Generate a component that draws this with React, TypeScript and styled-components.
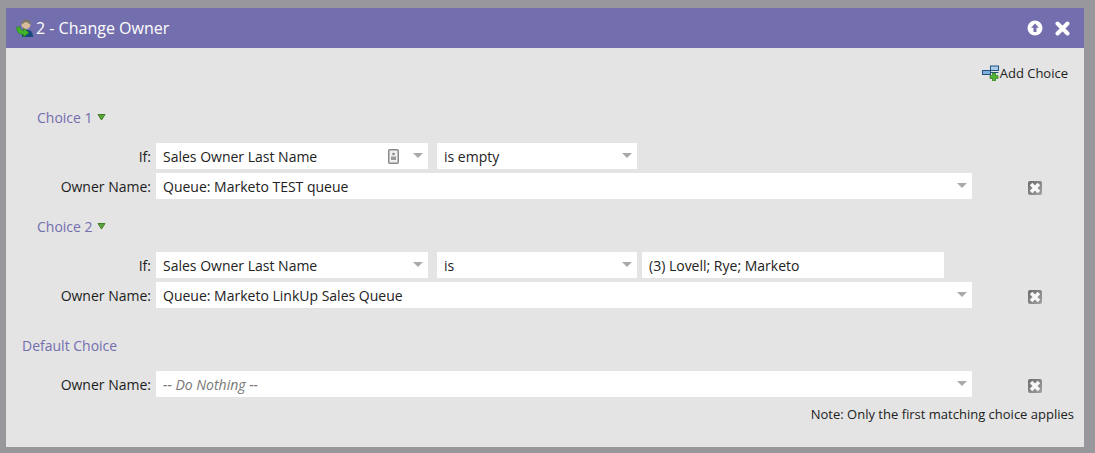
import React from "react"
import styled, {createGlobalStyle} from "styled-components"

const GlobalStyle = createGlobalStyle`
  html, body {
    margin: 0;
    padding: 0;
    background: #98979b;
  }
  body {
    font-family: "Open Sans", "Liberation Sans", sans-serif;
  }
`;

const Page = styled.div`
  width: 1095px;
  height: 453px;
  padding: 8px 11px 6px 6px;
  box-sizing: border-box;
  overflow: hidden;
`;

const Dialog = styled.div`
  height: 100%;
  display: flex;
  flex-direction: column;
  background: #e4e4e4;
`;

const Header = styled.div`
  height: 40px;
  flex: none;
  display: flex;
  align-items: center;
  padding: 0 14px 0 10px;
  background: #736eae;
  color: #fff;
`;

const Title = styled.div`
  flex: 1;
  margin-left: 3px;
  font-size: 16px;
  line-height: 40px;
`;

const HeaderTools = styled.div`
  display: flex;
  align-items: center;
  gap: 12px;
`;

const Body = styled.div`
  flex: 1;
  display: flex;
  flex-direction: column;
`;

const AddRow = styled.div`
  height: 26px;
  margin-top: 12px;
  padding-right: 16px;
  display: flex;
  align-items: center;
  justify-content: flex-end;
  gap: 1px;
  font-size: 13px;
  color: #222;
`;

const Heading = styled.div<{$left: number; $top: number; $bottom: number}>`
  height: 20px;
  display: flex;
  align-items: center;
  gap: 4px;
  margin: ${p => p.$top}px 0 ${p => p.$bottom}px ${p => p.$left}px;
  font-size: 14px;
  color: #736eae;
`;

const Row = styled.div<{$gap?: number}>`
  height: 26px;
  display: flex;
  align-items: center;
  margin-bottom: ${p => p.$gap ?? 0}px;
`;

const Label = styled.div`
  width: 145px;
  margin-right: 5px;
  text-align: right;
  font-size: 14px;
  color: #1c1c1c;
`;

const Field = styled.div<{$width: number; $after?: number; $muted?: boolean}>`
  width: ${p => p.$width}px;
  height: 26px;
  flex: none;
  box-sizing: border-box;
  margin-right: ${p => p.$after ?? 0}px;
  padding: 0 5px 0 7px;
  display: flex;
  align-items: center;
  gap: 14px;
  background: #fff;
  font-size: 14px;
  color: ${p => p.$muted ? "#777" : "#222"};
  font-style: ${p => p.$muted ? "italic" : "normal"};
`;

const FieldText = styled.span`
  flex: 1;
  padding-top: 1px;
  white-space: nowrap;
`;

const Caret = styled.span`
  width: 0;
  height: 0;
  flex: none;
  margin-top: -1px;
  border-left: 5px solid transparent;
  border-right: 5px solid transparent;
  border-top: 5px solid #a9a9a9;
`;

const DeleteButton = styled.span`
  margin: 4px 0 0 56px;
  display: flex;
  align-items: center;
`;

const Note = styled.div`
  margin-top: 8px;
  padding-right: 10px;
  text-align: right;
  font-size: 13px;
  color: #222;
`;

const ChoiceIcon = () => (
    <svg width="9" height="8" viewBox="0 0 9 8">
        <path d="M1 1.500h7L4.500 7z" fill="#5fa33c" stroke="#3f7d28" strokeWidth="1"/>
    </svg>
);

const OwnerIcon = () => (
    <svg width="17" height="18" viewBox="0 0 17 18">
        <path d="M6 18c0-4.500 2-7 5.500-7s5.500 2.500 5.500 7z" fill="#17487f"/>
        <circle cx="10" cy="5.500" r="4.500" fill="#d8bb98"/>
        <path d="M5.500 5.500C5 2 7.500.5 10 .5s5 1.500 4.500 5C12.500 4.500 11.500 3 10 3S7.500 4.500 5.500 5.500z" fill="#7a7667"/>
        <path d="M.5 8h3.500c0 2 1 3.500 3.500 3.800V9l5.500 4.800L7.500 18v-2.500C3 15.500.8 12.800.5 8z" fill="#3fb52c" stroke="#2a7d18" strokeWidth=".6"/>
    </svg>
);

const UpIcon = () => (
    <svg width="16" height="16" viewBox="0 0 16 16">
        <circle cx="8" cy="8" r="7.500" fill="#fff"/>
        <path d="M8 3.500l4 4.300H9.500V12h-3V7.800H4z" fill="#736eae"/>
    </svg>
);

const CloseIcon = () => (
    <svg width="15" height="15" viewBox="0 0 15 15">
        <path d="M2.500 2.500l10 10M12.500 2.500l-10 10" stroke="#fff" strokeWidth="4" strokeLinecap="round"/>
    </svg>
);

const AddChoiceIcon = () => (
    <svg width="17" height="16" viewBox="0 0 17 16">
        <rect x=".5" y="5.500" width="8" height="4" fill="#7fb0dc" stroke="#24527f"/>
        <rect x="8.500" y="1" width="8" height="4.500" fill="#a9cdec" stroke="#24527f"/>
        <path d="M8.500 3.500v4h8" fill="none" stroke="#24527f"/>
        <path d="M10.500 8h3v2.500H16v3h-2.500V16h-3v-2.500H8v-3h2.500z" fill="#52b334" stroke="#2f7a1c" strokeWidth=".7"/>
    </svg>
);

const CardIcon = () => (
    <svg width="11" height="15" viewBox="0 0 11 15">
        <rect x=".75" y=".75" width="9.500" height="13.500" rx="1" fill="#f0f0f0" stroke="#8a8a8a" strokeWidth="1.500"/>
        <circle cx="5.500" cy="5" r="1.300" fill="#8a8a8a"/>
        <rect x="3" y="7.500" width="5" height="3.500" fill="#9a9a9a"/>
    </svg>
);

const DeleteIcon = () => (
    <svg width="14" height="14" viewBox="0 0 14 14">
        <defs>
            <linearGradient id="deleteFill" x1="0" y1="0" x2="1" y2="1">
                <stop offset="0" stopColor="#6a6a6c"/>
                <stop offset="1" stopColor="#a2a2a4"/>
            </linearGradient>
        </defs>
        <rect width="14" height="14" rx="2" fill="url(#deleteFill)"/>
        <path d="M4.300 4.300l5.400 5.400M9.700 4.300l-5.400 5.400" stroke="#f8f8f8" strokeWidth="3.600" strokeLinecap="square"/>
    </svg>
);

const App = () => {
    return (
        <Page>
            <GlobalStyle/>
            <Dialog>
                <Header>
                    <OwnerIcon/>
                    <Title>2 - Change Owner</Title>
                    <HeaderTools>
                        <UpIcon/>
                        <CloseIcon/>
                    </HeaderTools>
                </Header>
                <Body>
                    <AddRow>
                        <AddChoiceIcon/>
                        <span>Add Choice</span>
                    </AddRow>

                    <Heading $left={31} $top={21} $bottom={16}>Choice 1 <ChoiceIcon/></Heading>
                    <Row $gap={4}>
                        <Label>If:</Label>
                        <Field $width={272} $after={9}>
                            <FieldText>Sales Owner Last Name</FieldText>
                            <CardIcon/>
                            <Caret/>
                        </Field>
                        <Field $width={200}>
                            <FieldText>is empty</FieldText>
                            <Caret/>
                        </Field>
                    </Row>
                    <Row>
                        <Label>Owner Name:</Label>
                        <Field $width={816}>
                            <FieldText>Queue: Marketo TEST queue</FieldText>
                            <Caret/>
                        </Field>
                        <DeleteButton><DeleteIcon/></DeleteButton>
                    </Row>

                    <Heading $left={31} $top={17} $bottom={16}>Choice 2 <ChoiceIcon/></Heading>
                    <Row $gap={4}>
                        <Label>If:</Label>
                        <Field $width={272} $after={9}>
                            <FieldText>Sales Owner Last Name</FieldText>
                            <Caret/>
                        </Field>
                        <Field $width={200} $after={5}>
                            <FieldText>is</FieldText>
                            <Caret/>
                        </Field>
                        <Field $width={302}>
                            <FieldText>(3) Lovell; Rye; Marketo</FieldText>
                        </Field>
                    </Row>
                    <Row>
                        <Label>Owner Name:</Label>
                        <Field $width={816}>
                            <FieldText>Queue: Marketo LinkUp Sales Queue</FieldText>
                            <Caret/>
                        </Field>
                        <DeleteButton><DeleteIcon/></DeleteButton>
                    </Row>

                    <Heading $left={16} $top={27} $bottom={16}>Default Choice</Heading>
                    <Row>
                        <Label>Owner Name:</Label>
                        <Field $width={816} $muted>
                            <FieldText>-- Do Nothing --</FieldText>
                            <Caret/>
                        </Field>
                        <DeleteButton><DeleteIcon/></DeleteButton>
                    </Row>
                    <Note>Note: Only the first matching choice applies</Note>
                </Body>
            </Dialog>
        </Page>
    )
};

export default App
